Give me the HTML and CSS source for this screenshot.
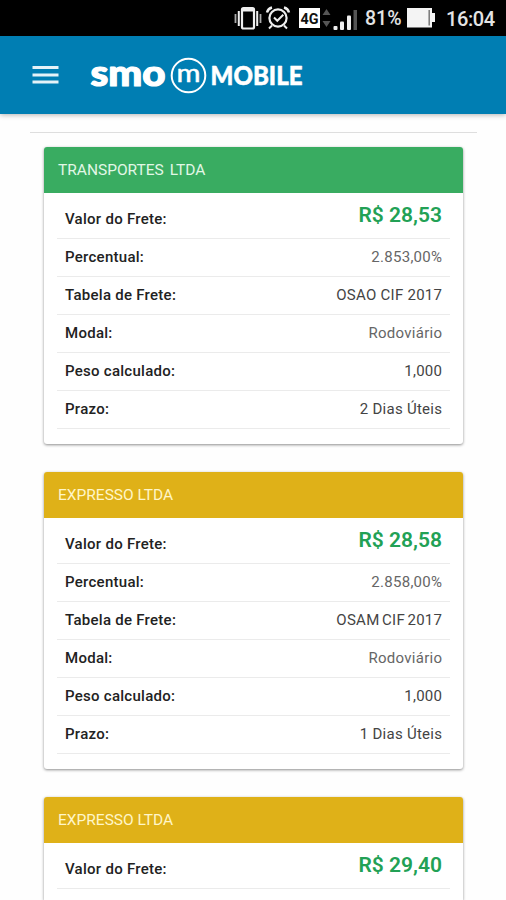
FILE: index.html
```html
<!DOCTYPE html>
<html lang="pt-BR">
<head>
<meta charset="utf-8">
<title>SMO Mobile</title>
<link rel="stylesheet" href="styles.css">
</head>
<body>
<div class="statusbar">
  <svg class="status-icons" width="140" height="36" viewBox="0 0 140 36">
    <g fill="none" stroke="#eee">
      <rect x="9" y="8" width="12" height="20.500" rx="1.500" stroke-width="2.200"/>
      <path d="M9 10h12" stroke-width="3"/>
      <path d="M5.800 11v15M24.200 11v15" stroke-width="2"/>
      <path d="M2.500 14v9M27.500 14v9" stroke-width="1.800" stroke="#aaa"/>
      <circle cx="45" cy="18" r="8.600" stroke-width="2.200"/>
      <path d="M41 17.500l3.300 3.300 6-6M39 25.500l-3 3M51 25.500l3 3" stroke-width="2"/>
      <path d="M34 12.500q1-4 5-5M51 7.500q4 1 5 5" stroke-width="2.400"/>
    </g>
    <rect x="66" y="8" width="21" height="20" fill="#fff"/>
    <text class="net" x="76.500" y="24" text-anchor="middle" textLength="18" lengthAdjust="spacingAndGlyphs">4G</text>
    <path d="M89.500 15l4-6 4 6zM89.500 21l4 6 4-6z" fill="#555"/>
    <rect x="100.500" y="26" width="4" height="4" rx="1" fill="#eee"/>
    <rect x="107" y="21.500" width="4" height="8.500" rx="1" fill="#eee"/>
    <rect x="114" y="15.500" width="4" height="14.500" rx="1" fill="#eee"/>
    <rect x="120.500" y="10" width="3.500" height="20" fill="#555"/>
  </svg>
  <span class="percent">81%</span>
  <svg class="battery" width="28" height="20" viewBox="0 0 28 20">
    <path d="M0 0h25v5h3v9h-3v5.500H0z" fill="#f4f4f4"/>
    <path d="M22.200 2v15.500" stroke="#777" stroke-width="1.500"/>
  </svg>
  <span class="clock">16:04</span>
</div>
<header class="appbar">
  <svg class="menu" width="27" height="20" viewBox="0 0 27 20">
    <path d="M0.500 2.500h26M0.500 10h26M0.500 17h26" stroke="#e4f2f8" stroke-width="2.800"/>
  </svg>
  <svg class="logo" width="222" height="60" viewBox="-3 -10 222 60">
    <text class="smo" x="0.500" y="30.500" textLength="75" lengthAdjust="spacingAndGlyphs">smo</text>
    <circle cx="98.500" cy="20.500" r="16.800" fill="none" stroke="#fff" stroke-width="2"/>
    <text class="mark" x="98.500" y="27" text-anchor="middle" textLength="24" lengthAdjust="spacingAndGlyphs">m</text>
    <text class="mobile" x="120.500" y="29.500" textLength="92" lengthAdjust="spacingAndGlyphs">MOBILE</text>
  </svg>
</header>
<main class="content">
  <section class="card">
    <h2 class="title green">TRANSPORTES LTDA</h2>
    <dl class="rows">
      <div class="row first"><dt>Valor do Frete:</dt><dd class="price">R$ 28,53</dd></div>
      <div class="row"><dt>Percentual:</dt><dd class="soft">2.853,00%</dd></div>
      <div class="row"><dt>Tabela de Frete:</dt><dd>OSAO CIF 2017</dd></div>
      <div class="row"><dt>Modal:</dt><dd class="soft">Rodoviário</dd></div>
      <div class="row"><dt>Peso calculado:</dt><dd>1,000</dd></div>
      <div class="row"><dt>Prazo:</dt><dd>2 Dias Úteis</dd></div>
    </dl>
  </section>
  <section class="card">
    <h2 class="title amber">EXPRESSO LTDA</h2>
    <dl class="rows">
      <div class="row first"><dt>Valor do Frete:</dt><dd class="price">R$ 28,58</dd></div>
      <div class="row"><dt>Percentual:</dt><dd class="soft">2.858,00%</dd></div>
      <div class="row"><dt>Tabela de Frete:</dt><dd class="tight">OSAM CIF 2017</dd></div>
      <div class="row"><dt>Modal:</dt><dd class="soft">Rodoviário</dd></div>
      <div class="row"><dt>Peso calculado:</dt><dd>1,000</dd></div>
      <div class="row"><dt>Prazo:</dt><dd>1 Dias Úteis</dd></div>
    </dl>
  </section>
  <section class="card partial">
    <h2 class="title amber">EXPRESSO LTDA</h2>
    <dl class="rows">
      <div class="row first"><dt>Valor do Frete:</dt><dd class="price">R$ 29,40</dd></div>
    </dl>
  </section>
</main>
</body>
</html>
```
FILE: styles.css
```css
* { box-sizing: border-box; }
body {
  margin: 0;
  height: 900px;
  overflow: hidden;
  display: flex;
  flex-direction: column;
  background: #fefefe;
  font-family: Roboto, sans-serif;
}
.statusbar {
  flex: none;
  height: 36px;
  padding-left: 233px;
  display: flex;
  align-items: center;
  background: #000;
  color: #e4e4e4;
  font-size: 20px;
  line-height: 34px;
  white-space: nowrap;
}
.status-icons { flex: none; }
.percent { width: 34px; font-size: 19.5px; font-weight: 500; padding-top: 2px; margin-left: -8px; }
.battery { flex: none; margin-left: 8px; margin-right: 11px; }
.clock { padding-top: 2px; font-weight: 500; letter-spacing: -0.4px; }
.net { font: 700 15px Roboto, sans-serif; fill: #111; }
.appbar {
  flex: none;
  height: 78px;
  padding-left: 32px;
  display: flex;
  align-items: center;
  background: #007eb3;
  box-shadow: 0 1px 5px rgba(0, 0, 0, 0.3);
}
.logo { margin-left: 28px; }
.logo text { fill: #fff; stroke: #fff; stroke-linejoin: round; }
.smo { font: 900 36px Lato, sans-serif; stroke-width: 1.2px; }
.mark { font: 400 25px Lato, sans-serif; stroke-width: 0.5px; }
.mobile { font: 900 26px Lato, sans-serif; stroke-width: 0.5px; }
.content {
  flex: 1 1 0;
  min-height: 0;
  display: flex;
  flex-direction: column;
  margin: 18px 29px 0 30px;
  padding: 14px 14px 0;
  border-top: 1px solid #dedede;
}
.card {
  flex: none;
  height: 297px;
  margin-bottom: 28px;
  border-radius: 3px;
  background: #fff;
  box-shadow: 0 1px 3px rgba(0, 0, 0, 0.45);
}
.partial {
  flex: 1 1 0;
  height: auto;
  margin-bottom: 0;
  border-radius: 3px 3px 0 0;
}
.title {
  margin: 0;
  height: 46px;
  padding-left: 14px;
  border-radius: 3px 3px 0 0;
  font-size: 15.5px;
  font-weight: 400;
  line-height: 46px;
}
.green { background: #39ac61; color: #e2f7e6; word-spacing: 2px; }
.amber { background: #dfb118; color: #fff6c8; }
.rows { margin: 0; padding: 0 13px; }
.row {
  height: 38px;
  padding: 0 8px;
  display: flex;
  justify-content: space-between;
  border-bottom: 1px solid #ebebeb;
  line-height: 37px;
  font-size: 15px;
}
.first { height: 46px; }
.first dt { padding-top: 8px; }
dt { font-weight: 500; color: #222; letter-spacing: 0.27px; }
dd { margin: 0; color: #444; letter-spacing: 0.27px; margin-right: -0.27px; }
.soft { color: #666; }
.tight { word-spacing: -1.5px; }
.price { color: #22a155; font-size: 21px; font-weight: 600; line-height: 45px; letter-spacing: 0; margin-right: 0; }
```
